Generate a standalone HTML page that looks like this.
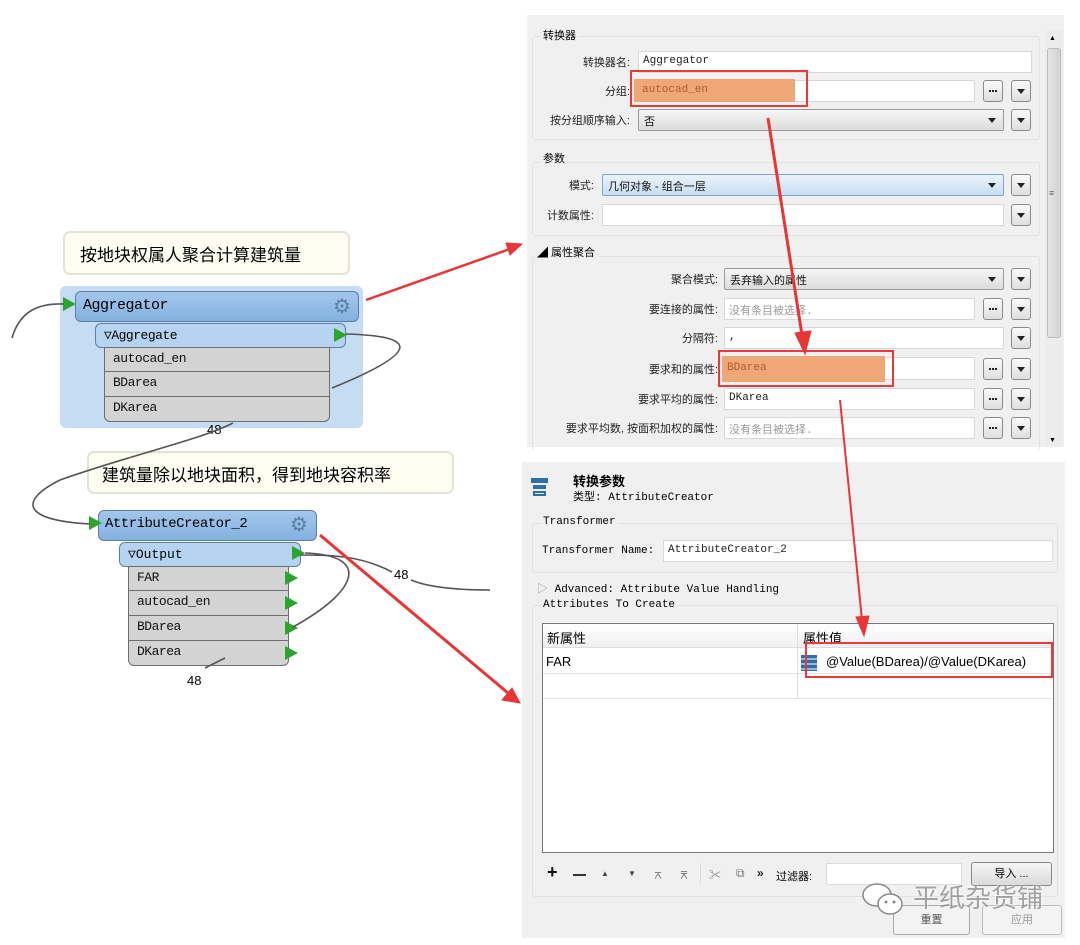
<!DOCTYPE html>
<html><head><meta charset="utf-8"><style>
*{margin:0;padding:0;box-sizing:border-box}
body{width:1080px;height:945px;background:#fff;position:relative;overflow:hidden;font-family:"Liberation Sans","Noto Sans CJK SC",sans-serif}
.a{position:absolute}
.m{font-family:"Liberation Mono","Noto Sans CJK SC",monospace}
.lbl{position:absolute;font-size:11px;color:#222;text-align:right;white-space:nowrap}
.f{position:absolute;background:#fff;border:1px solid #d8d8d8;font-size:11px;padding:3px 4px;font-family:"Liberation Mono","Noto Sans CJK SC",monospace;color:#222;white-space:nowrap}
.cb{position:absolute;border:1px solid #9a9a9a;border-radius:2px;background:linear-gradient(#f6f6f6,#dcdcdc);font-size:11px;padding:3px 5px;color:#111}
.cb:after{content:"";position:absolute;right:7px;top:8px;border:4px solid transparent;border-top:5px solid #222}
.bt{position:absolute;width:20px;height:22px;border:1px solid #8a8a8a;border-radius:3px;background:linear-gradient(#fafafa,#dedede)}
.bt.d:after{content:"";position:absolute;left:5px;top:8px;border:4px solid transparent;border-top:5px solid #222}
.bt.e:after{content:"";position:absolute;left:5px;top:9px;width:2px;height:2px;background:#222;box-shadow:3px 0 #222,6px 0 #222}
.grp{position:absolute;border:1px solid #e2e2e2;border-radius:3px}
.row{position:absolute;background:#d3d3d3;border:1px solid #6e6e6e;font-size:13px;padding:3px 8px;font-family:"Liberation Mono",monospace;color:#111;letter-spacing:-0.5px}
.tri{position:absolute;width:0;height:0;border-top:7px solid transparent;border-bottom:7px solid transparent;border-left:13px solid #2da42d}
.tb{position:absolute;top:866px;font-size:11px;color:#444}
</style></head><body>

<!-- top panel -->
<div class="a" style="left:527px;top:15px;width:537px;height:432px;background:#f0f0f0"></div>
<div class="grp" style="left:532px;top:36px;width:508px;height:104px"></div>
<div class="a" style="left:541px;top:27px;font-size:11px;background:#f0f0f0;padding:0 2px">转换器</div>
<div class="lbl" style="right:450px;top:54px">转换器名:</div>
<div class="f" style="left:638px;top:51px;width:394px;height:22px">Aggregator</div>
<div class="lbl" style="right:450px;top:83px">分组:</div>
<div class="f" style="left:638px;top:80px;width:337px;height:22px"></div>
<div class="a m" style="left:634px;top:79px;width:161px;height:23px;background:#f0a777;font-size:11px;color:#b05a2a;padding:5px 8px">autocad_en</div>
<div class="a" style="left:630px;top:70px;width:178px;height:37px;border:2px solid #e83a3a"></div>
<div class="bt e" style="left:983px;top:80px"></div><div class="bt d" style="left:1011px;top:80px"></div>
<div class="lbl" style="right:450px;top:112px">按分组顺序输入:</div>
<div class="cb" style="left:638px;top:109px;width:366px;height:22px">否</div>
<div class="bt d" style="left:1011px;top:109px"></div>

<div class="grp" style="left:532px;top:162px;width:508px;height:74px"></div>
<div class="a" style="left:541px;top:150px;font-size:11px;background:#f0f0f0;padding:0 2px">参数</div>
<div class="lbl" style="right:486px;top:177px">模式:</div>
<div class="cb" style="left:602px;top:174px;width:402px;height:22px;background:linear-gradient(#eaf3fb,#c9def2);border-color:#7ea6cf">几何对象 - 组合一层</div>
<div class="bt d" style="left:1011px;top:174px"></div>
<div class="lbl" style="right:486px;top:207px">计数属性:</div>
<div class="f" style="left:602px;top:204px;width:402px;height:22px"></div>
<div class="bt d" style="left:1011px;top:204px"></div>

<div class="grp" style="left:532px;top:256px;width:508px;height:195px;border-bottom:none"></div>
<div class="a" style="left:535px;top:244px;font-size:11px;background:#f0f0f0;padding:0 2px">◢ 属性聚合</div>
<div class="lbl" style="right:362px;top:271px">聚合模式:</div>
<div class="cb" style="left:724px;top:268px;width:280px;height:22px">丢弃输入的属性</div>
<div class="bt d" style="left:1011px;top:268px"></div>
<div class="lbl" style="right:362px;top:301px">要连接的属性:</div>
<div class="f" style="left:724px;top:298px;width:251px;height:22px;color:#999">没有条目被选择.</div>
<div class="bt e" style="left:983px;top:298px"></div><div class="bt d" style="left:1011px;top:298px"></div>
<div class="lbl" style="right:362px;top:330px">分隔符:</div>
<div class="f" style="left:724px;top:327px;width:280px;height:22px">,</div>
<div class="bt d" style="left:1011px;top:327px"></div>
<div class="lbl" style="right:362px;top:361px">要求和的属性:</div>
<div class="f" style="left:724px;top:357px;width:251px;height:23px"></div>
<div class="a m" style="left:722px;top:356px;width:163px;height:26px;background:#f0a777;font-size:11px;color:#b05a2a;padding:6px 5px">BDarea</div>
<div class="a" style="left:718px;top:350px;width:176px;height:37px;border:2px solid #e83a3a"></div>
<div class="bt e" style="left:983px;top:358px"></div><div class="bt d" style="left:1011px;top:358px"></div>
<div class="lbl" style="right:362px;top:391px">要求平均的属性:</div>
<div class="f" style="left:724px;top:388px;width:251px;height:22px">DKarea</div>
<div class="bt e" style="left:983px;top:388px"></div><div class="bt d" style="left:1011px;top:388px"></div>
<div class="lbl" style="right:362px;top:420px">要求平均数, 按面积加权的属性:</div>
<div class="f" style="left:724px;top:417px;width:251px;height:22px;color:#999">没有条目被选择.</div>
<div class="bt e" style="left:983px;top:417px"></div><div class="bt d" style="left:1011px;top:417px"></div>
<!-- scrollbar -->
<div class="a" style="left:1045px;top:30px;width:18px;height:417px;background:#ececec"></div>
<div class="a" style="left:1047px;top:48px;width:14px;height:290px;background:linear-gradient(90deg,#e4e4e4,#d2d2d2);border:1px solid #bbb;border-radius:3px"></div>
<div class="a" style="left:1049px;top:35px;font-size:7px">▲</div>
<div class="a" style="left:1049px;top:437px;font-size:7px">▼</div>
<div class="a" style="left:1049px;top:188px;font-size:9px;color:#666">≡</div>

<!-- bottom panel -->
<div class="a" style="left:522px;top:462px;width:543px;height:476px;background:#f0f0f0"></div>
<div class="a" style="left:531px;top:478px;width:17px;height:5px;background:#2f6ea8"></div>
<div class="a" style="left:533px;top:485px;width:13px;height:4px;border:2px solid #2f6ea8"></div>
<div class="a" style="left:533px;top:491px;width:13px;height:5px;border:2px solid #2f6ea8"></div>
<div class="a" style="left:573px;top:471px;font-size:13px;font-weight:bold">转换参数</div>
<div class="a m" style="left:573px;top:488px;font-size:11px">类型: AttributeCreator</div>
<div class="grp" style="left:532px;top:523px;width:526px;height:50px"></div>
<div class="a m" style="left:541px;top:516px;font-size:11px;background:#f0f0f0;padding:0 2px">Transformer</div>
<div class="a m" style="left:542px;top:545px;font-size:11px">Transformer Name:</div>
<div class="f" style="left:663px;top:540px;width:390px;height:22px">AttributeCreator_2</div>
<div class="a m" style="left:537px;top:580px;font-size:11px"><span style="color:#999">▷</span> Advanced: Attribute Value Handling</div>
<div class="grp" style="left:532px;top:605px;width:526px;height:292px"></div>
<div class="a m" style="left:541px;top:599px;font-size:11px;background:#f0f0f0;padding:0 2px">Attributes To Create</div>
<div class="a" style="left:542px;top:623px;width:512px;height:230px;background:#fff;border:1px solid #777"></div>
<div class="a" style="left:543px;top:624px;width:510px;height:24px;background:linear-gradient(#fff,#f0f0f0);border-bottom:1px solid #ddd"></div>
<div class="a" style="left:797px;top:624px;width:1px;height:74px;background:#ddd"></div>
<div class="a" style="left:543px;top:673px;width:510px;height:1px;background:#e4e4e4"></div>
<div class="a" style="left:543px;top:698px;width:510px;height:1px;background:#e4e4e4"></div>
<div class="a" style="left:547px;top:628px;font-size:13px">新属性</div>
<div class="a" style="left:803px;top:628px;font-size:13px">属性值</div>
<div class="a" style="left:546px;top:654px;font-size:13px">FAR</div>
<div class="a" style="left:801px;top:655px;width:16px;height:16px;background:repeating-linear-gradient(#2f6ea8 0 3px,#9ab8d8 3px 5px)"></div>
<div class="a" style="left:826px;top:654px;font-size:13px">@Value(BDarea)/@Value(DKarea)</div>
<div class="a" style="left:805px;top:642px;width:248px;height:36px;border:2px solid #e83a3a"></div>
<div class="tb" style="left:547px;top:862px;font-size:18px;font-weight:bold;color:#111">+</div>
<div class="a" style="left:573px;top:874px;width:13px;height:2px;background:#333"></div>
<div class="tb" style="left:601px;top:869px;font-size:8px">▲</div>
<div class="tb" style="left:628px;top:869px;font-size:8px">▼</div>
<div class="tb" style="left:653px;top:867px;font-size:10px">⌅</div>
<div class="tb" style="left:679px;top:867px;font-size:10px">⌆</div>
<div class="a" style="left:700px;top:863px;width:1px;height:22px;background:#ddd"></div>
<div class="tb" style="left:709px;top:866px;font-size:12px;color:#888">✂</div>
<div class="tb" style="left:736px;top:866px;font-size:12px;color:#777">⧉</div>
<div class="tb" style="left:757px;top:866px;font-size:12px;font-weight:bold;color:#222">»</div>
<div class="a" style="left:776px;top:868px;font-size:11px">过滤器:</div>
<div class="a" style="left:826px;top:863px;width:136px;height:22px;background:#fff;border:1px solid #ddd"></div>
<div class="a" style="left:971px;top:862px;width:81px;height:24px;border:1px solid #888;border-radius:3px;background:linear-gradient(#f6f6f6,#dadada);font-size:11px;text-align:center;line-height:22px">导入 ...</div>
<div class="a" style="left:893px;top:905px;width:77px;height:30px;border:1px solid #aaa;border-radius:3px;background:#f3f3f3;font-size:11px;text-align:center;line-height:28px;color:#555">重置</div>
<div class="a" style="left:982px;top:905px;width:80px;height:30px;border:1px solid #bbb;border-radius:3px;background:#f3f3f3;font-size:11px;text-align:center;line-height:28px;color:#999">应用</div>
<div class="a" style="left:913px;top:878px;font-size:26px;color:#888;opacity:.75;text-shadow:0 0 2px #fff,0 0 2px #fff">平纸杂货铺</div>
<svg class="a" style="left:860px;top:880px" width="48" height="40"><ellipse cx="17" cy="15" rx="14" ry="11" fill="#fff" stroke="#888" stroke-width="1.5"/><ellipse cx="30" cy="24" rx="12" ry="10" fill="#fff" stroke="#888" stroke-width="1.5"/><circle cx="26" cy="22" r="1.5" fill="#888"/><circle cx="34" cy="22" r="1.5" fill="#888"/></svg>

<!-- left: bubble 1 -->
<div class="a" style="left:63px;top:231px;width:287px;height:44px;background:#fdfdf2;border:2px solid #e4e4d4;border-radius:7px;font-size:17px;padding:8px 15px">按地块权属人聚合计算建筑量</div>
<div class="a" style="left:60px;top:286px;width:303px;height:142px;background:#c6dcf3;border-radius:6px"></div>
<div class="a" style="left:75px;top:291px;width:284px;height:31px;background:linear-gradient(#a3c7ec,#84b1e0);border:1px solid #5c7fa5;border-radius:6px;font-size:15px;padding:5px 7px;font-family:'Liberation Mono',monospace;letter-spacing:-0.5px">Aggregator</div>
<div class="a" style="left:333px;top:294px;font-size:20px;color:#5d7ea3">⚙</div>
<div class="tri" style="left:63px;top:297px"></div>
<div class="a" style="left:95px;top:323px;width:251px;height:25px;background:#b6d4f1;border:1px solid #5c7fa5;border-radius:6px;font-size:13px;padding:4px 8px;font-family:'Liberation Mono',monospace;letter-spacing:-0.5px">▽Aggregate</div>
<div class="tri" style="left:334px;top:328px"></div>
<div class="row" style="left:104px;top:347px;width:226px;height:25px">autocad_en</div>
<div class="row" style="left:104px;top:371px;width:226px;height:26px">BDarea</div>
<div class="row" style="left:104px;top:396px;width:226px;height:26px;border-radius:0 0 6px 6px">DKarea</div>
<div class="a" style="left:207px;top:422px;font-size:13px">48</div>

<!-- bubble 2 -->
<div class="a" style="left:87px;top:451px;width:367px;height:43px;background:#fdfdf2;border:2px solid #e4e4d4;border-radius:7px;font-size:17px;padding:8px 13px">建筑量除以地块面积，得到地块容积率</div>
<div class="a" style="left:98px;top:510px;width:219px;height:31px;background:linear-gradient(#a3c7ec,#84b1e0);border:1px solid #5c7fa5;border-radius:6px;font-size:14px;padding:5px 6px;font-family:'Liberation Mono',monospace;letter-spacing:-0.5px">AttributeCreator_2</div>
<div class="a" style="left:290px;top:512px;font-size:20px;color:#5d7ea3">⚙</div>
<div class="tri" style="left:89px;top:516px"></div>
<div class="a" style="left:119px;top:542px;width:182px;height:25px;background:#b6d4f1;border:1px solid #5c7fa5;border-radius:6px;font-size:13px;padding:4px 8px;font-family:'Liberation Mono',monospace">▽Output</div>
<div class="tri" style="left:292px;top:546px"></div>
<div class="row" style="left:128px;top:566px;width:161px;height:25px">FAR</div>
<div class="row" style="left:128px;top:590px;width:161px;height:26px">autocad_en</div>
<div class="row" style="left:128px;top:615px;width:161px;height:26px">BDarea</div>
<div class="row" style="left:128px;top:640px;width:161px;height:26px;border-radius:0 0 6px 6px">DKarea</div>
<div class="tri" style="left:285px;top:571px"></div><div class="tri" style="left:285px;top:596px"></div><div class="tri" style="left:285px;top:621px"></div><div class="tri" style="left:285px;top:646px"></div>
<div class="a" style="left:394px;top:567px;font-size:13px;background:#fff">48</div>
<div class="a" style="left:187px;top:673px;font-size:13px">48</div>

<svg class="a" style="left:0;top:0" width="1080" height="945">
<g fill="none" stroke="#555" stroke-width="1.6">
<path d="M12 338 C20 310 40 303 64 304"/>
<path d="M346 334 C420 336 420 352 332 388"/>
<path d="M233 423 C200 440 130 455 60 480 C20 500 20 520 90 524"/>
<path d="M300 555 C330 555 360 555 392 572"/>
<path d="M411 580 C430 588 460 590 490 590"/>
<path d="M305 553 C370 555 360 590 293 627"/>
<path d="M205 668 L225 658"/>
</g>
<g stroke="#e83535" fill="#e83535">
<line x1="366" y1="300" x2="510" y2="249" stroke-width="2.5"/><polygon points="522,244 506,243 510,255"/>
<line x1="768" y1="118" x2="802" y2="335" stroke-width="3"/><polygon points="805,354 795,333 811,331"/>
<line x1="840" y1="400" x2="862" y2="620" stroke-width="2"/><polygon points="864,636 856,617 869,616"/>
<line x1="320" y1="535" x2="508" y2="693" stroke-width="3"/><polygon points="520,703 502,700 512,688"/>
</g>
</svg>
</body></html>
